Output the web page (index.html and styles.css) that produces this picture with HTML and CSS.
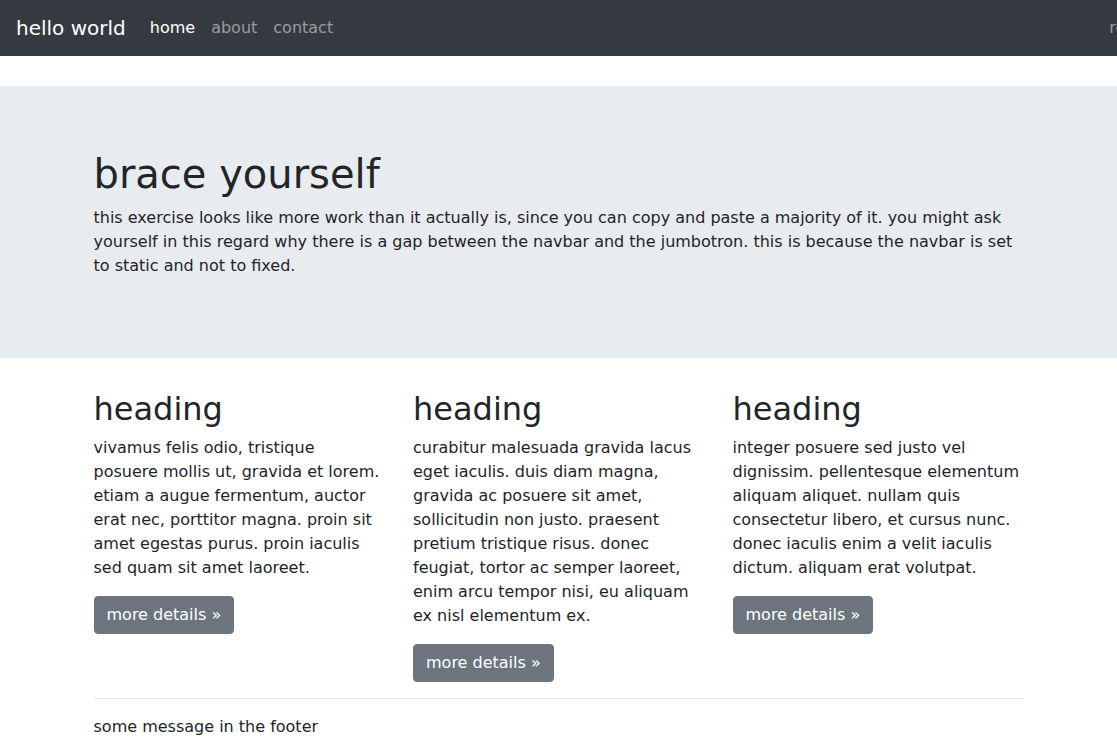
FILE: index.html
```html
<!DOCTYPE html>
<html lang="en">
<head>
<meta charset="utf-8">
<title>hello world</title>
<link rel="stylesheet" href="styles.css">
</head>
<body>
<nav class="navbar">
  <a class="brand" href="#">hello world</a>
  <ul class="nav">
    <li><a class="nav-link active" href="#">home</a></li>
    <li><a class="nav-link" href="#">about</a></li>
    <li><a class="nav-link" href="#">contact</a></li>
  </ul>
  <div class="nav-right"><a class="nav-link" href="#">register</a></div>
</nav>
<main>
  <section class="jumbotron">
    <div class="container">
      <h1>brace yourself</h1>
      <p>this exercise looks like more work than it actually is, since you can copy and paste a majority of it. you might ask yourself in this regard why there is a gap between the navbar and the jumbotron. this is because the navbar is set to static and not to fixed.</p>
    </div>
  </section>
  <div class="container">
    <div class="row">
      <div class="col">
        <h2>heading</h2>
        <p>vivamus felis odio, tristique posuere mollis ut, gravida et lorem. etiam a augue fermentum, auctor erat nec, porttitor magna. proin sit amet egestas purus. proin iaculis sed quam sit amet laoreet.</p>
        <a class="btn" href="#">more details »</a>
      </div>
      <div class="col">
        <h2>heading</h2>
        <p>curabitur malesuada gravida lacus eget iaculis. duis diam magna, gravida ac posuere sit amet, sollicitudin non justo. praesent pretium tristique risus. donec feugiat, tortor ac semper laoreet, enim arcu tempor nisi, eu aliquam ex nisl elementum ex.</p>
        <a class="btn" href="#">more details »</a>
      </div>
      <div class="col">
        <h2>heading</h2>
        <p>integer posuere sed justo vel dignissim. pellentesque elementum aliquam aliquet. nullam quis consectetur libero, et cursus nunc. donec iaculis enim a velit iaculis dictum. aliquam erat volutpat.</p>
        <a class="btn" href="#">more details »</a>
      </div>
    </div>
    <hr>
    <footer>
      <p>some message in the footer</p>
    </footer>
  </div>
</main>
</body>
</html>
```

FILE: styles.css
```css
html, body {
  overflow-x: hidden;
}
body {
  margin: 0;
  font-family: "DejaVu Sans", sans-serif;
  font-size: 16px;
  line-height: 1.5;
  color: #212529;
  background: #fff;
}
a { text-decoration: none; }

.navbar {
  display: flex;
  align-items: center;
  background: #343a40;
  padding: 8px 16px;
  height: 40px;
}
.brand {
  font-size: 20px;
  line-height: 30px;
  padding: 5px 0;
  margin-right: 16px;
  color: #fff;
  white-space: nowrap;
}
.nav {
  display: flex;
  list-style: none;
  margin: 0;
  padding: 0;
}
.nav-link {
  display: block;
  padding: 8px;
  color: rgba(255,255,255,.5);
  white-space: nowrap;
}
.nav-link.active { color: #fff; }
.nav-right {
  margin-left: auto;
  margin-right: -78px;
  flex-shrink: 0;
}

.jumbotron {
  background: #e9ecef;
  padding: 64px 0;
  margin: 30px 0 32px;
}
.container {
  width: 930px;
  margin: 0 auto;
}
h1 {
  font-size: 40px;
  font-weight: 500;
  line-height: 1.2;
  margin: 0 0 8px;
}
h2 {
  font-size: 32px;
  font-weight: 500;
  line-height: 1.2;
  margin: 0 0 8px;
}
p {
  margin: 0 0 16px;
}

.row {
  display: grid;
  grid-template-columns: repeat(3, 287px);
  column-gap: 32.5px;
  align-items: start;
}
.btn {
  display: inline-block;
  padding: 6px 12px;
  line-height: 24px;
  border: 1px solid #6c757d;
  border-radius: 4px;
  background: #6c757d;
  color: #fff;
}
hr {
  margin: 16px 0;
  border: 0;
  border-top: 1px solid rgba(0,0,0,.1);
  height: 0;
}
footer p { margin: 0 0 16px; }
```
